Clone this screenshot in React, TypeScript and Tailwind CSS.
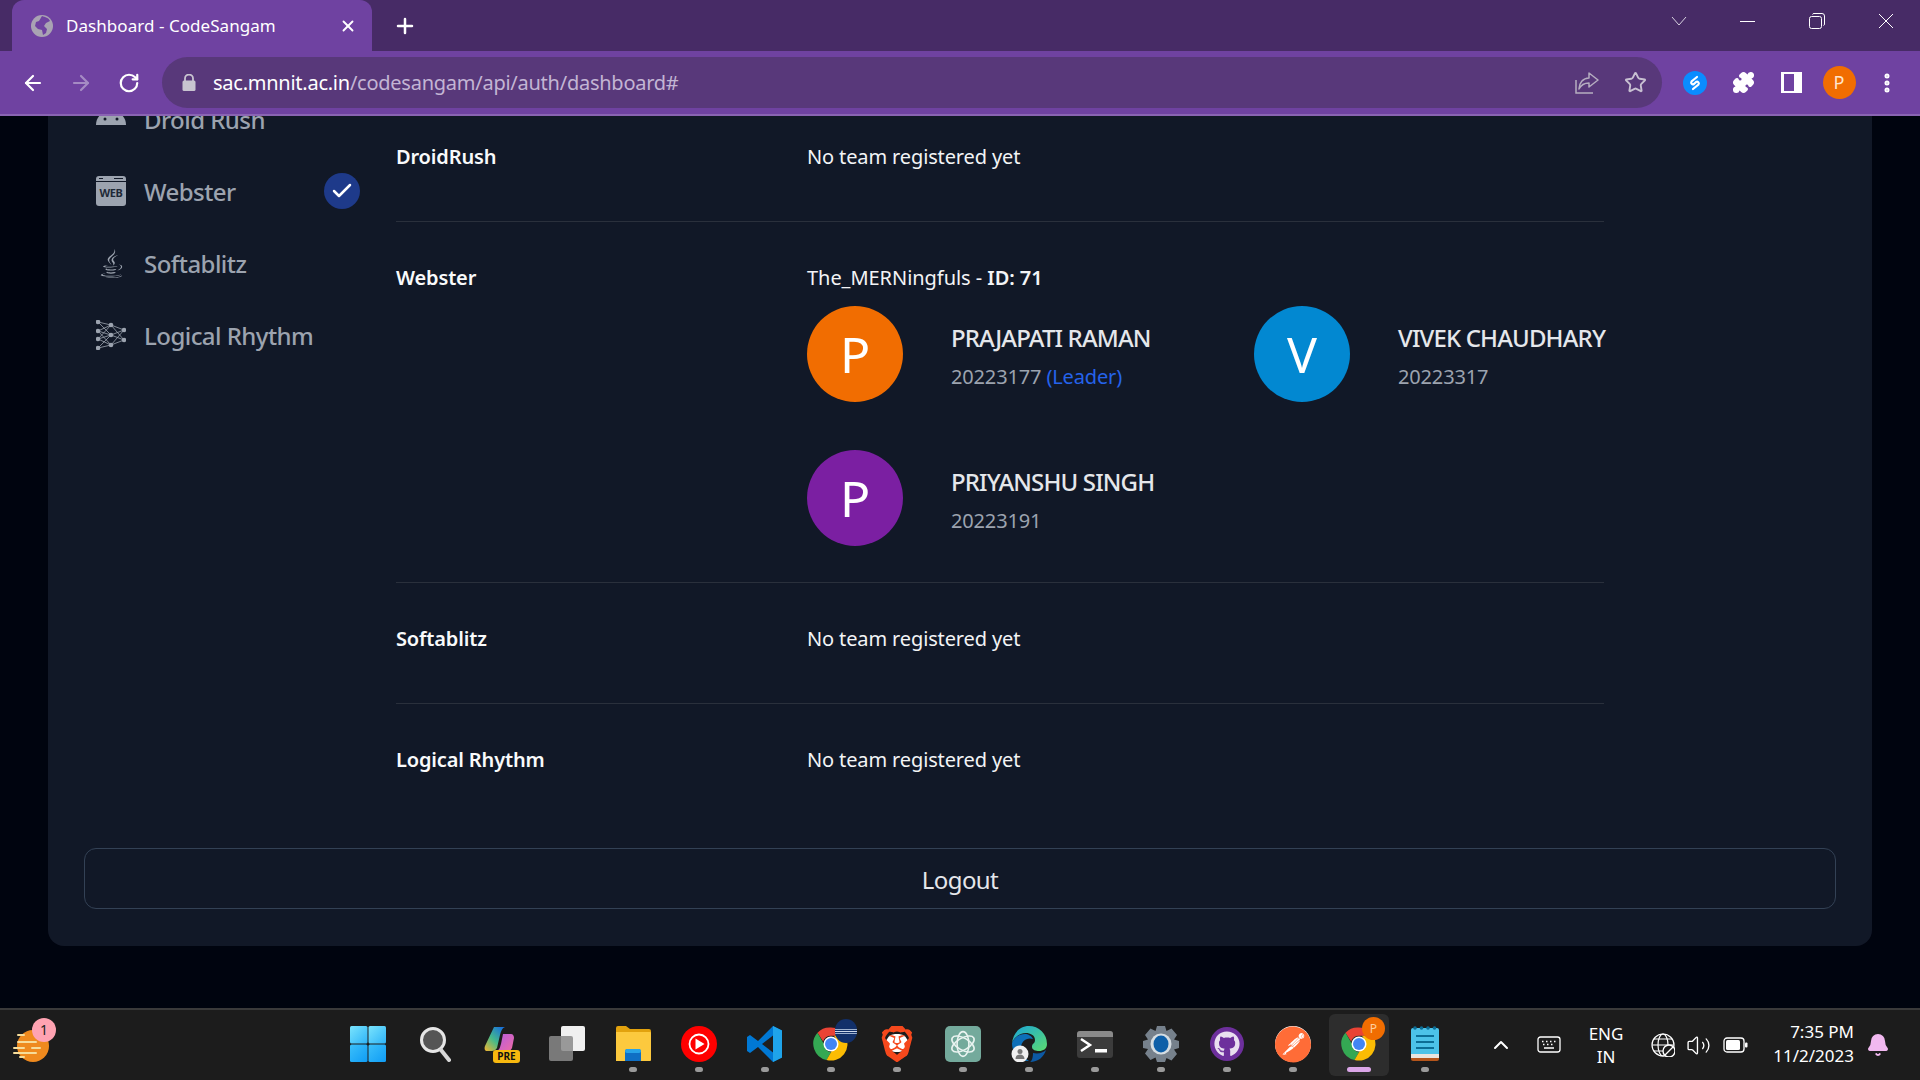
import type { ReactNode } from "react";
import { Check, Plus, X, ArrowLeft, ArrowRight, RotateCw, Star, Puzzle, ChevronUp, Bell, Volume2, EllipsisVertical } from "lucide-react";
import { FaJava, FaGithub } from "react-icons/fa";
import { SiBrave, SiPostman } from "react-icons/si";

const font = "font-['Noto_Sans','Open_Sans',sans-serif]";

function ChromeLogo({ s = 36 }: { s?: number }) {
  return (
    <svg width={s} height={s} viewBox="0 0 48 48">
      <path d="M24 2a22 22 0 0 1 19 11H24a11 11 0 0 0-10.5 7.5L6 9A22 22 0 0 1 24 2z" fill="#ea4335" />
      <path d="M6 9l9.5 16.5A11 11 0 0 0 24 35l-6 10.2A22 22 0 0 1 6 9z" fill="#34a853" />
      <path d="M43 13a22 22 0 0 1-25 32.2L28 28a11 11 0 0 0 0-15z" fill="#fbbc04" />
      <circle cx="24" cy="24" r="10" fill="#fff" />
      <circle cx="24" cy="24" r="8" fill="#4285f4" />
    </svg>
  );
}

function Taskbar() {
  const items: { n: ReactNode; dot?: boolean; active?: boolean }[] = [
    {
      n: (
        <svg width="36" height="36" viewBox="0 0 36 36" className="-ml-[2px]">
          <defs>
            <linearGradient id="wa" x1="0" y1="0" x2="1" y2="1">
              <stop offset="0" stopColor="#7ae4fd" />
              <stop offset="1" stopColor="#2fb4f8" />
            </linearGradient>
            <linearGradient id="wb" x1="0" y1="0" x2="1" y2="1">
              <stop offset="0" stopColor="#3cc0fa" />
              <stop offset="1" stopColor="#0f9cf5" />
            </linearGradient>
          </defs>
          <rect x="0" y="0" width="17.500" height="17.500" rx="1.500" fill="url(#wa)" />
          <rect x="18.500" y="0" width="17.500" height="17.500" rx="1.500" fill="url(#wa)" />
          <rect x="0" y="18.500" width="17.500" height="17.500" rx="1.500" fill="url(#wb)" />
          <rect x="18.500" y="18.500" width="17.500" height="17.500" rx="1.500" fill="url(#wb)" />
        </svg>
      ),
    },
    {
      n: (
        <svg width="32" height="36" viewBox="0 0 32 36">
          <circle cx="14" cy="14" r="11.500" fill="#555" stroke="#e6e6e6" strokeWidth="3" />
          <path d="M22 24l8 10" stroke="#d8d8d8" strokeWidth="4" strokeLinecap="round" />
        </svg>
      ),
    },
    {
      n: (
        <div className="relative w-[36px] h-[36px] ml-[2px]">
          <svg width="30" height="26" viewBox="0 0 30 26">
            <defs>
              <linearGradient id="cpa" x1="0" y1="1" x2="0.8" y2="0">
                <stop offset="0" stopColor="#f5b52e" />
                <stop offset="0.5" stopColor="#45b98a" />
                <stop offset="1" stopColor="#1a73d9" />
              </linearGradient>
              <linearGradient id="cpb" x1="0" y1="0" x2="1" y2="1">
                <stop offset="0" stopColor="#b45ce0" />
                <stop offset="1" stopColor="#ef6ca5" />
              </linearGradient>
            </defs>
            <path d="M10 1h11c-3 1-4 4-5 8l-3 13c-1 2-3 3-5 3H3c-2 0-3-2-2-5z" fill="url(#cpa)" />
            <path d="M19 8h8c2 0 3 2 3 4l-2 10c-1 2-2 3-4 3H13c3-2 3-4 4-7z" fill="url(#cpb)" />
          </svg>
          <div className={`absolute right-[0px] bottom-[-1px] w-[27px] h-[13px] rounded-[3px] bg-[#f8b90f] text-[#111] text-[10px] leading-[13px] font-bold text-center ${font}`}>PRE</div>
        </div>
      ),
    },
    {
      n: (
        <div className="relative w-[36px] h-[36px]">
          <div className="absolute right-[0px] top-0 w-[24px] h-[25px] rounded-[2px] bg-[#f0f0f0]" />
          <div className="absolute left-[0px] bottom-[1px] w-[24px] h-[25px] rounded-[2px] bg-[#8a8a8a]/85" />
        </div>
      ),
    },
    {
      n: (
        <svg width="36" height="36" viewBox="0 0 36 36">
          <path d="M1 2a2 2 0 0 1 2-2h8l4 3h19a2 2 0 0 1 2 2v2H1z" fill="#e2a20e" />
          <path d="M1 6h34a1 1 0 0 1 1 1v27a1 1 0 0 1-1 1H1z" fill="#fcc93e" />
          <path d="M10 35V26a3 3 0 0 1 3-3h10a3 3 0 0 1 3 3v9z" fill="#0f6fc4" />
          <rect x="10" y="23" width="16" height="4" rx="2" fill="#27a3e8" />
        </svg>
      ),
      dot: true,
    },
    {
      n: (
        <svg width="38" height="38" viewBox="0 0 38 38">
          <circle cx="19" cy="19" r="18" fill="#ff0000" />
          <circle cx="19" cy="19" r="9.500" fill="none" stroke="#fff" strokeWidth="1.800" />
          <path d="M15.500 13.500l9 5.500-9 5.500z" fill="#fff" />
        </svg>
      ),
      dot: true,
    },
    {
      n: (
        <svg width="36" height="36" viewBox="0 0 36 36">
          <path d="M26 0l9 4.500v27L26 36 11 21 3 27l-3-2v-14l3-2 8 6z" fill="#0078d4" />
          <path d="M26 9.500L15 18l11 8.500z" fill="#1f1f1f" />
          <path d="M26 0l9 4.500v27L26 36z" fill="#1fa4ea" />
        </svg>
      ),
      dot: true,
    },
    {
      n: (
        <div className="relative w-[36px] h-[36px]">
          <ChromeLogo />
          <div className="absolute right-[-8px] top-[-7px] w-[22px] h-[24px] rounded-full bg-[#12306a] flex flex-col justify-center gap-[1px] overflow-hidden">
            <div className="h-[1px] bg-[#9fb2d0]" />
            <div className="h-[1px] bg-[#cdd8ea]" />
            <div className="h-[1px] bg-[#9fb2d0]" />
          </div>
        </div>
      ),
      dot: true,
    },
    {
      n: (
        <div className="relative w-[36px] h-[36px] flex items-center justify-center">
          <div className="absolute left-[7px] top-[8px] w-[22px] h-[18px] rounded-full bg-white" />
          <SiBrave size={36} color="#f5481c" className="relative" />
        </div>
      ),
      dot: true,
    },
    {
      n: (
        <div className="w-[36px] h-[36px] rounded-[5px] bg-[#74aa9c] flex items-center justify-center">
          <svg width="28" height="28" viewBox="0 0 26 26" fill="none" stroke="#e9f3f0" strokeWidth="1.500">
            <ellipse cx="13" cy="13" rx="5.500" ry="11.500" />
            <ellipse cx="13" cy="13" rx="5.500" ry="11.500" transform="rotate(60 13 13)" />
            <ellipse cx="13" cy="13" rx="5.500" ry="11.500" transform="rotate(120 13 13)" />
          </svg>
        </div>
      ),
      dot: true,
    },
    {
      n: (
        <svg width="36" height="36" viewBox="0 0 36 36">
          <defs>
            <linearGradient id="edg" x1="0" y1="0" x2="1" y2="1">
              <stop offset="0" stopColor="#1aa5d8" />
              <stop offset="1" stopColor="#5cdc70" />
            </linearGradient>
          </defs>
          <path d="M18 0a18 18 0 0 1 18 18c0 5-4 7-8 7-3 0-7-1-7-4 0-4 3-3 3-7 0-5-5-7-9-7C9 7 3 11 1 17 2 8 8 0 18 0z" fill="url(#edg)" />
          <path d="M1 17c2-6 8-9 13-9 3 0 7 2 8 5-6-2-12 2-12 9 0 5 3 10 8 13-9 0-17-7-17-18z" fill="#0d6fb8" />
          <path d="M22 27c5 1 10 0 13-3-2 7-8 12-16 12 2-1 3-5 3-9z" fill="#0c59a4" />
          <circle cx="9" cy="28" r="8.500" fill="#f0f0f0" />
          <circle cx="9" cy="25.500" r="2.500" fill="#777" />
          <path d="M4.500 33c0-3 2-4.500 4.500-4.500s4.500 1.500 4.500 4.500z" fill="#777" />
        </svg>
      ),
      dot: true,
    },
    {
      n: (
        <div className="w-[36px] h-[27px] rounded-[3px] bg-[#3c3c3c] overflow-hidden relative flex flex-col">
          <div className="h-[6px] bg-[#8a8a8a]" />
          <svg width="36" height="21" viewBox="0 0 36 21">
            <path d="M4 2l9 6-9 6" fill="none" stroke="#fff" strokeWidth="2.500" />
            <rect x="18" y="12" width="12" height="3.500" fill="#fff" />
          </svg>
        </div>
      ),
      dot: true,
    },
    {
      n: (
        <svg width="36" height="36" viewBox="0 0 36 36">
          <path d="M14 0h8l1.500 5 5-2.500L34 9l-3 4.500 5 1.500v7l-5 1.500 3 4.500-5.500 6.500-5-2.500L22 36h-8l-1.500-4.500-5 2.500L2 27.500 5 23 0 22v-7l5-1.500L2 9l5.500-6.500 5 2.500z" fill="#76818c" />
          <circle cx="18" cy="18" r="10.500" fill="#d5dde2" />
          <ellipse cx="18" cy="18" rx="7.500" ry="8.500" fill="#0d5fa8" />
        </svg>
      ),
      dot: true,
    },
    {
      n: (
        <div className="w-[34px] h-[34px] rounded-full bg-[#6d2f9c] flex items-center justify-center">
          <FaGithub size={26} color="#e9dff0" />
        </div>
      ),
      dot: true,
    },
    { n: <div className="w-[36px] h-[36px] rounded-full bg-white flex items-center justify-center"><SiPostman size={37} color="#ff6c37" /></div>, dot: true },
    {
      n: (
        <div className="relative w-[36px] h-[36px]">
          <ChromeLogo />
          <div className={`absolute right-[-8px] top-[-9px] w-[23px] h-[23px] rounded-full bg-[#f16d01] text-[#ffcf9e] text-[12px] leading-[23px] text-center ${font}`}>P</div>
        </div>
      ),
      dot: true,
      active: true,
    },
    {
      n: (
        <svg width="28" height="36" viewBox="0 0 28 36">
          <rect x="0" y="2" width="28" height="30" rx="2" fill="#4cc2e8" />
          <rect x="0" y="28" width="28" height="4" fill="#e9e5df" />
          <path d="M0 32h28v1a2 2 0 0 1-2 2H2a2 2 0 0 1-2-2z" fill="#b4551b" />
          <g fill="#0c6d95">
            <rect x="5" y="9" width="18" height="2" />
            <rect x="5" y="15" width="18" height="2" />
            <rect x="5" y="21" width="18" height="2" />
            <circle cx="4" cy="2" r="1.800" />
            <circle cx="10.500" cy="2" r="1.800" />
            <circle cx="17" cy="2" r="1.800" />
            <circle cx="23.500" cy="2" r="1.800" />
          </g>
        </svg>
      ),
      dot: true,
    },
  ];
  return (
    <footer className={`h-[72px] shrink-0 bg-[#1c1c1c] border-t-2 border-[#3a3a3a] flex text-white ${font}`}>
      <div className="w-[336px] pl-[12px] flex items-center relative">
        <svg width="40" height="40" viewBox="0 0 40 40">
          <circle cx="21" cy="21" r="16" fill="#ef8a1e" />
          <g stroke="#f6dc9a" strokeWidth="2" strokeLinecap="round">
            <path d="M6 10h6" />
            <path d="M6 17h18" />
            <path d="M2 23h10" />
            <path d="M2 28h22" />
            <path d="M20 23h8" />
            <path d="M8 32h4" />
          </g>
        </svg>
        <div className="absolute left-[32px] top-[8px] w-[24px] h-[24px] rounded-full bg-[#ffa3b2] text-[#222] text-[14px] leading-[24px] text-center">1</div>
      </div>
      {items.map((it, i) => (
        <div key={i} className="w-[66px] relative flex items-center justify-center pb-[2px]">
          {it.active && <div className="absolute left-[3px] right-[3px] top-[4px] bottom-[4px] rounded-[6px] bg-[#2d2d2d]" />}
          <div className="relative">{it.n}</div>
          {it.dot && <div className={`absolute bottom-[8px] left-1/2 -translate-x-1/2 h-[5px] rounded-full ${it.active ? "w-[24px] bg-[#dba6e8]" : "w-[8px] bg-[#9a9a9a]"}`} />}
        </div>
      ))}
      <div className="w-[19px]" />
      <div className="w-[48px] flex items-center justify-center"><ChevronUp size={24} strokeWidth={2} color="#fff" /></div>
      <div className="w-[48px] flex items-center justify-center">
        <svg width="24" height="18" viewBox="0 0 24 18" fill="none" stroke="#fff" strokeWidth="1.300">
          <rect x="1" y="1" width="22" height="15" rx="2.500" />
          <path d="M5 5.500h1.500M9 5.500h1.500M13 5.500h1.500M17 5.500h1.500M6 8.500h1.500M10 8.500h1.500M14 8.500h1.500M7 12h10" strokeWidth="1.500" />
        </svg>
      </div>
      <div className="w-[66px] flex flex-col items-center justify-center text-[17px] leading-[23px] pb-[1px]"><span>ENG</span><span>IN</span></div>
      <div className="w-[7px]" />
      <div className="w-[34px] flex items-center justify-center">
        <svg width="24" height="24" viewBox="0 0 24 24" fill="none" stroke="#fff" strokeWidth="1.200">
          <circle cx="12" cy="12" r="11" />
          <ellipse cx="12" cy="12" rx="5" ry="11" />
          <path d="M1 12h22M3 6h18M3 18h18" />
          <circle cx="18" cy="18" r="6" fill="#1c1c1c" strokeWidth="1.400" />
          <path d="M14 22l8-8" />
        </svg>
      </div>
      <div className="w-[36px] flex items-center justify-center"><Volume2 size={25} strokeWidth={1.300} color="#fff" /></div>
      <div className="w-[38px] flex items-center justify-center">
        <svg width="25" height="16" viewBox="0 0 25 16">
          <rect x="1" y="1" width="20" height="14" rx="3" fill="none" stroke="#fff" strokeWidth="1.300" />
          <rect x="3" y="3" width="14" height="10" rx="1.500" fill="#fff" />
          <rect x="22" y="5.500" width="2.500" height="5" rx="1" fill="#fff" />
        </svg>
      </div>
      <div className="w-[100px] flex flex-col items-end justify-center text-[17px] leading-[24px] tracking-[0px] pb-[3px]"><span>7:35 PM</span><span>11/2/2023</span></div>
      <div className="w-[48px] flex items-center justify-center"><Bell size={24} fill="#f1b8f0" color="#f1b8f0" /></div>
    </footer>
  );
}

function BrowserChrome() {
  return (
    <header className={`shrink-0 text-white ${font}`}>
      <div className="h-[51px] bg-[#472b66] flex pl-[12px]">
        <div className="w-[360px] h-full rounded-t-[12px] bg-[#6f42a1] flex items-center pl-[19px] relative">
          <svg width="22" height="22" viewBox="0 0 22 22">
            <circle cx="11" cy="11" r="11" fill="#a9a3b3" />
            <path d="M11 1c3 1 7 2 8 5l-4 2-2 3 3 3-1 4-3 2-1-5-4-1-3-3 1-4 3-1z" fill="#6f42a1" />
          </svg>
          <span className="ml-[13px] text-[17px] tracking-[0.05px] leading-none">Dashboard - CodeSangam</span>
          <X size={18} strokeWidth={2.500} className="absolute right-[15px] top-[17px]" />
        </div>
        <div className="w-[64px] flex items-center justify-center pl-[2px]"><Plus size={24} strokeWidth={2.500} /></div>
        <div className="ml-auto flex text-white">
          <div className="w-[69px] flex items-center justify-center pb-[9px]">
            <svg width="16" height="10" viewBox="0 0 16 10" fill="none" stroke="#d8d2e0" strokeWidth="1"><path d="M1 1l7 8 7-8" /></svg>
          </div>
          <div className="w-[69px] flex items-center justify-center pb-[9px]"><div className="w-[15px] h-[1px] bg-white" /></div>
          <div className="w-[69px] flex items-center justify-center pb-[9px]">
            <svg width="16" height="16" viewBox="0 0 16 16" fill="none" stroke="#fff" strokeWidth="1">
              <rect x="0.500" y="3.500" width="12" height="12" rx="2" />
              <path d="M3.500 1.500a1.500 1.500 0 0 1 1.500-1h8a2.500 2.500 0 0 1 2.500 2.500v8a1.500 1.500 0 0 1-1 1.500" />
            </svg>
          </div>
          <div className="w-[69px] flex items-center justify-center pb-[9px]">
            <svg width="16" height="16" viewBox="0 0 16 16" fill="none" stroke="#fff" strokeWidth="1"><path d="M1 1l14 14M15 1L1 15" /></svg>
          </div>
        </div>
      </div>
      <div className="h-[63px] bg-[#6f42a1] flex items-center pl-[9px]">
        <div className="w-[48px] flex justify-center"><ArrowLeft size={24} strokeWidth={2.200} /></div>
        <div className="w-[48px] flex justify-center"><ArrowRight size={24} strokeWidth={2.200} color="#a58bc4" /></div>
        <div className="w-[48px] flex justify-center"><RotateCw size={22} strokeWidth={2.400} /></div>
        <div className="ml-[9px] w-[1500px] h-[51px] rounded-full bg-[#58387a] flex items-center pl-[20px] pr-[3px]">
          <svg width="14" height="17" viewBox="0 0 14 17">
            <path d="M3 7V4.500a4 4 0 0 1 8 0V7" fill="none" stroke="#c8c4d0" strokeWidth="1.800" />
            <rect x="0.500" y="6.500" width="13" height="10.500" rx="1.500" fill="#c8c4d0" />
          </svg>
          <div className="ml-[17px] text-[20px] leading-none tracking-[-0.25px] whitespace-nowrap"><span className="text-white">sac.mnnit.ac.in</span><span className="text-[#c3b5d4]">/codesangam/api/auth/dashboard#</span></div>
          <div className="ml-auto w-[48px] flex justify-center">
            <svg width="24" height="22" viewBox="0 0 24 22" fill="none" stroke="#b5adc0" strokeWidth="1.500">
              <path d="M1 8v13h17" />
              <path d="M14 1l9 7-9 7v-4c-5 0-8 2-10 6 0-6 4-11 10-11z" strokeLinejoin="round" />
            </svg>
          </div>
          <div className="w-[48px] flex justify-center"><Star size={23} strokeWidth={2} color="#c8c0d2" /></div>
        </div>
        <div className="ml-[9px] w-[48px] flex justify-center">
          <div className="w-[24px] h-[24px] rounded-full bg-[#0a8cff] flex items-center justify-center">
            <svg width="16" height="16" viewBox="0 0 16 16" fill="none" stroke="#fff" strokeWidth="2.200" strokeLinecap="round"><path d="M10 2L4.500 6.500a1.800 1.800 0 0 0 2.500 2.500l1-1M6 14l5.500-4.500A1.800 1.800 0 0 0 9 7l-1 1" /></svg>
          </div>
        </div>
        <div className="w-[48px] flex justify-center"><Puzzle size={23} fill="#fff" color="#fff" /></div>
        <div className="w-[48px] flex justify-center">
          <div className="w-[21px] h-[21px] bg-white flex justify-end p-[2px]"><div className="w-[10px] bg-[#6f42a1] mr-[6px]" /></div>
        </div>
        <div className="w-[48px] flex justify-center"><div className="w-[33px] h-[33px] rounded-full bg-[#f16d01] text-[#ffe5cc] text-[18px] leading-[33px] text-center">P</div></div>
        <div className="w-[48px] flex justify-center"><EllipsisVertical size={24} strokeWidth={3} /></div>
      </div>
      <div className="h-[2px] bg-[#8a64b3]" />
    </header>
  );
}

function NetIcon() {
  const pts: [number, number][] = [[2, 2], [2, 11], [2, 19], [2, 28], [15, 5], [15, 15], [15, 25], [28, 10], [28, 20]];
  return (
    <svg width="30" height="30" viewBox="0 0 30 30" stroke="#9ca3af" strokeWidth="0.800" fill="#9ca3af">
      {[[0, 4], [0, 5], [1, 4], [1, 5], [1, 6], [2, 4], [2, 5], [2, 6], [3, 5], [3, 6], [4, 7], [4, 8], [5, 7], [5, 8], [6, 7], [6, 8]].map(([a, b], i) => (
        <line key={i} x1={pts[a][0]} y1={pts[a][1]} x2={pts[b][0]} y2={pts[b][1]} />
      ))}
      {pts.map(([x, y], i) => <circle key={i} cx={x} cy={y} r="2.300" stroke="none" />)}
    </svg>
  );
}

function SideItem({ icon, label, checked }: { icon: ReactNode; label: string; checked?: boolean }) {
  return (
    <div className="h-[72px] flex items-center">
      <div className="w-[30px] h-[30px] flex items-center justify-center">{icon}</div>
      <span className="ml-[18px] pt-[2px] text-[24px] font-medium text-[#9ca3af] tracking-[-0.55px] whitespace-nowrap">{label}</span>
      {checked && (
        <div className="ml-auto w-[36px] h-[36px] rounded-full bg-[#1e3a8a] flex items-center justify-center"><Check size={24} strokeWidth={2.500} color="#fff" /></div>
      )}
    </div>
  );
}

function Empty({ label, border = true }: { label: string; border?: boolean }) {
  return (
    <div className={`flex pt-[42px] ${border ? "pb-[50px] border-b border-[#2a303c]" : ""}`}>
      <div className="w-[411px] shrink-0 text-[20px] leading-[28px] font-semibold text-[#f9fafb] tracking-[-0.15px]">{label}</div>
      <div className="text-[20px] leading-[28px] text-[#f3f4f6] tracking-[-0.13px]">No team registered yet</div>
    </div>
  );
}

function Member({ letter, color, name, id, leader }: { letter: string; color: string; name: string; id: string; leader?: boolean }) {
  return (
    <div className="flex items-center w-[447px]">
      <div className={`w-[96px] h-[96px] rounded-full ${color} flex items-center justify-center text-white text-[50px]`}>{letter}</div>
      <div className="ml-[48px] pt-[5px] whitespace-nowrap">
        <div className="text-[24px] leading-[30px] font-medium text-[#e5e7eb] tracking-[-0.85px]">{name}</div>
        <div className="mt-[10px] text-[20px] leading-[28px] text-[#9ca3af] tracking-[-0.15px]">
          {id}{leader && <span className="text-[#2563eb]"> (Leader)</span>}
        </div>
      </div>
    </div>
  );
}

export default function App() {
  return (
    <div className={`w-[1920px] h-[1080px] flex flex-col overflow-hidden bg-[#00040f] ${font}`}>
      <BrowserChrome />
      <main className="flex-1 min-h-0 overflow-hidden flex flex-col justify-end px-[48px] pb-[62px]">
        <div className="shrink-0 bg-[#111827] rounded-b-[16px] px-[36px] pb-[37px]">
          <div className="flex">
            <aside className="w-[312px] shrink-0 pl-[12px] pr-[36px]">
              <SideItem
                label="Droid Rush"
                icon={<svg width="30" height="30" viewBox="0 0 30 30"><path d="M0 30c0-8 6-14 15-14s15 6 15 14z" fill="#9ca3af" transform="translate(0 -9)" /><circle cx="9" cy="15" r="1.500" fill="#111827" /><circle cx="21" cy="15" r="1.500" fill="#111827" /></svg>}
              />
              <SideItem
                checked
                label="Webster"
                icon={
                  <div className="w-[30px] h-[30px] rounded-[3px] bg-[#9ca3af] flex flex-col overflow-hidden">
                    <div className="h-[6px] border-b border-[#111827] flex items-center justify-between px-[3px]"><span className="w-[4px] h-[1px] bg-[#111827]" /><span className="w-[9px] h-[1px] bg-[#111827]" /></div>
                    <span className="text-[11px] leading-[22px] font-bold text-[#1f2937] text-center tracking-[-0.3px]">WEB</span>
                  </div>
                }
              />
              <SideItem label="Softablitz" icon={<FaJava size={29} color="#9ca3af" />} />
              <SideItem label="Logical Rhythm" icon={<NetIcon />} />
            </aside>
            <section className="w-[1208px] pt-[18px]">
              <Empty label="DroidRush" />
              <div className="pt-[42px] pb-[36px] border-b border-[#2a303c] flex">
                <div className="w-[411px] shrink-0 text-[20px] leading-[28px] font-semibold text-[#f9fafb] tracking-[-0.15px]">Webster</div>
                <div>
                  <div className="text-[20px] leading-[28px] text-[#f3f4f6] tracking-[-0.05px]">The_MERNingfuls - <span className="font-semibold">ID: 71</span></div>
                  <div className="mt-[14px] flex flex-wrap gap-y-[48px] w-[894px]">
                    <Member letter="P" color="bg-[#f16d01]" name="PRAJAPATI RAMAN" id="20223177" leader />
                    <Member letter="V" color="bg-[#0288d1]" name="VIVEK CHAUDHARY" id="20223317" />
                    <Member letter="P" color="bg-[#7b1fa2]" name="PRIYANSHU SINGH" id="20223191" />
                  </div>
                </div>
              </div>
              <Empty label="Softablitz" />
              <Empty label="Logical Rhythm" border={false} />
            </section>
          </div>
          <div className="mt-[74px] h-[61px] pt-[2px] rounded-[12px] border border-[#334155] flex items-center justify-center text-[24px] text-[#e5e7eb] tracking-[-0.6px]">Logout</div>
        </div>
      </main>
      <Taskbar />
    </div>
  );
}
